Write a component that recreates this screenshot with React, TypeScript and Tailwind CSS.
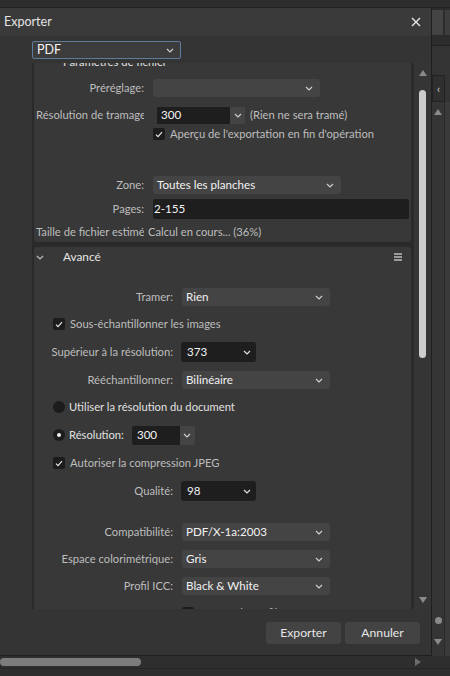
import React from "react";

const Chev = ({ c = "#cfcfcf" }: { c?: string }) => (
  <svg width="8" height="5" viewBox="0 0 8 5" className="shrink-0">
    <path d="M1 1 L4 4 L7 1" stroke={c} strokeWidth="1.2" fill="none" />
  </svg>
);

const Check = () => (
  <div className="w-[12px] h-[12px] rounded-[2px] bg-[#1c1c1c] flex items-center justify-center shrink-0">
    <svg width="8" height="7" viewBox="0 0 8 7">
      <path d="M1 3.6 L3 5.6 L7 1.2" stroke="#e8e8e8" strokeWidth="1.2" fill="none" />
    </svg>
  </div>
);

const Sel = ({ w, v, h = "h-[18px]" }: { w: string; v: string; h?: string }) => (
  <div className={`${w} ${h} bg-[#444444] rounded-[3px] flex items-center justify-between pl-[4px] pr-[7px] text-[#f2f2f2] text-[11.6px] shrink-0`}>
    <span className="whitespace-nowrap">{v}</span>
    <Chev />
  </div>
);

const DarkSel = ({ v }: { v: string }) => (
  <div className="w-[75px] h-[20px] bg-[#1e1e1e] rounded-[3px] flex items-center justify-between pl-[6px] pr-[5px] text-[#f2f2f2] text-[11.6px] shrink-0">
    <span>{v}</span>
    <Chev c="#e0e0e0" />
  </div>
);

const L1 = ({ t }: { t: string }) => (
  <div className="w-[108px] ml-[2px] text-right whitespace-nowrap overflow-hidden text-[#bdbdbd] leading-[16px] shrink-0">{t}</div>
);
const L2 = ({ t }: { t: string }) => (
  <div className="w-[139px] text-right whitespace-nowrap overflow-hidden text-[#bdbdbd] leading-[16px] shrink-0">{t}</div>
);

const UpTri = () => (
  <svg width="8" height="6" viewBox="0 0 8 6"><path d="M0 6 L4 0 L8 6Z" fill="#8a8a8a" /></svg>
);
const DownTri = () => (
  <svg width="8" height="6" viewBox="0 0 8 6"><path d="M0 0 L4 6 L8 0Z" fill="#8a8a8a" /></svg>
);

export default function App() {
  return (
    <div className="w-[450px] h-[676px] bg-[#2c2c2c] overflow-hidden flex flex-col font-['Lato',sans-serif] text-[11.2px] leading-[16px] select-none">
      {/* top strip */}
      <div className="h-[8px] bg-[#2d2d2d] border-b border-[#222] shrink-0" />
      <div className="flex h-[648px] shrink-0">
        {/* dialog */}
        <div className="w-[432px] bg-[#343434] border-r border-b border-[#1f1f1f] flex flex-col shrink-0">
          <div className="h-[28px] bg-[#3a3a3a] flex items-center justify-between pl-[4px] pr-[10px] shrink-0">
            <span className="text-[12.5px] text-[#e4e4e4]">Exporter</span>
            <svg width="10" height="10" viewBox="0 0 10 10">
              <path d="M1 1 L9 9 M9 1 L1 9" stroke="#e8e8e8" strokeWidth="1.4" />
            </svg>
          </div>
          <div className="h-[27px] pl-[32px] pt-[5px] shrink-0">
            <div className="w-[149px] h-[18px] border border-[#5e7c9c] bg-[#3c3c3c] rounded-[2px] flex items-center justify-between pl-[4px] pr-[6px] text-[#f4f4f4] text-[12.5px]">
              <span>PDF</span>
              <Chev />
            </div>
          </div>
          {/* scroll area */}
          <div className="flex h-[546px] ml-[32px] shrink-0">
            <div className="w-[381px] bg-[#2a2a2a] overflow-hidden pl-[2px] pr-[2px]">
              <div className="mt-[-13px] flex flex-col gap-[5px]">
                {/* section 1 */}
                <div className="bg-[#383838] rounded-[3px] flex flex-col h-[192px]">
                  <div className="h-[24px] flex items-center pl-[29px] text-[#e2e2e2] shrink-0">Paramètres de fichier</div>
                  <div className="h-[20px] mt-[4px] flex items-center">
                    <L1 t="Préréglage:" />
                    <div className="ml-[9px]"><Sel w="w-[167px]" v="" /></div>
                  </div>
                  <div className="h-[20px] mt-[7px] flex items-center">
                    <L1 t="Résolution de tramage" />
                    <div className="ml-[13px] flex h-[17px]">
                      <div className="w-[73px] bg-[#1e1e1e] flex items-center pl-[4px] text-[#f2f2f2] text-[11.6px]">300</div>
                      <div className="w-[15px] bg-[#444] flex items-center justify-center"><Chev /></div>
                    </div>
                    <span className="ml-[5px] text-[#bdbdbd] whitespace-nowrap">(Rien ne sera tramé)</span>
                  </div>
                  <div className="h-[18px] flex items-center pl-[119px]">
                    <Check />
                    <span className="ml-[5px] text-[#bdbdbd] whitespace-nowrap">Aperçu de l'exportation en fin d'opération</span>
                  </div>
                  <div className="h-[20px] mt-[32px] flex items-center">
                    <L1 t="Zone:" />
                    <div className="ml-[9px]"><Sel w="w-[188px]" v="Toutes les planches" /></div>
                  </div>
                  <div className="h-[20px] mt-[4px] flex items-center">
                    <L1 t="Pages:" />
                    <div className="ml-[9px] w-[256px] h-[20px] bg-[#1e1e1e] rounded-[2px] flex items-center pl-[1px] text-[#f2f2f2] text-[11.6px]">2-155</div>
                  </div>
                  <div className="h-[20px] mt-[3px] flex items-center">
                    <L1 t="Taille de fichier estimée :" />
                    <span className="ml-[4px] text-[#bdbdbd] whitespace-nowrap">Calcul en cours... (36%)</span>
                  </div>
                </div>
                {/* section 2 */}
                <div className="bg-[#383838] rounded-[3px] flex flex-col pb-[20px]">
                  <div className="h-[20px] flex items-center pl-[2px] pr-[9px] shrink-0">
                    <Chev c="#bdbdbd" />
                    <span className="ml-[19px] text-[#e6e6e6] text-[11.8px] flex-1">Avancé</span>
                    <div className="flex flex-col gap-[1.5px]">
                      <div className="w-[8px] h-[1.5px] bg-[#9a9a9a]" />
                      <div className="w-[8px] h-[1.5px] bg-[#9a9a9a]" />
                      <div className="w-[8px] h-[1.5px] bg-[#9a9a9a]" />
                    </div>
                  </div>
                  <div className="h-[20px] mt-[20px] flex items-center">
                    <L2 t="Tramer:" />
                    <div className="ml-[9px]"><Sel w="w-[148px]" v="Rien" /></div>
                  </div>
                  <div className="h-[18px] mt-[8px] flex items-center pl-[19px]">
                    <Check />
                    <span className="ml-[5px] text-[#bdbdbd] whitespace-nowrap">Sous-échantillonner les images</span>
                  </div>
                  <div className="h-[20px] mt-[9px] flex items-center">
                    <L2 t="Supérieur à la résolution:" />
                    <div className="ml-[8px]"><DarkSel v="373" /></div>
                  </div>
                  <div className="h-[20px] mt-[8px] flex items-center">
                    <L2 t="Rééchantillonner:" />
                    <div className="ml-[9px]"><Sel w="w-[148px]" v="Bilinéaire" /></div>
                  </div>
                  <div className="h-[18px] mt-[8px] flex items-center pl-[19px]">
                    <div className="w-[12px] h-[12px] rounded-full bg-[#1c1c1c] shrink-0" />
                    <span className="ml-[4px] text-[#e0e0e0] whitespace-nowrap">Utiliser la résolution du document</span>
                  </div>
                  <div className="h-[20px] mt-[9px] flex items-center pl-[19px]">
                    <div className="w-[12px] h-[12px] rounded-full bg-[#1c1c1c] flex items-center justify-center shrink-0">
                      <div className="w-[4px] h-[4px] rounded-full bg-[#f0f0f0]" />
                    </div>
                    <span className="ml-[4px] text-[#e0e0e0] whitespace-nowrap">Résolution:</span>
                    <div className="ml-[8px] flex h-[19px]">
                      <div className="w-[48px] bg-[#1e1e1e] rounded-l-[2px] flex items-center pl-[5px] text-[#f2f2f2] text-[11.6px]">300</div>
                      <div className="w-[15px] bg-[#444] rounded-r-[2px] flex items-center justify-center"><Chev /></div>
                    </div>
                  </div>
                  <div className="h-[18px] mt-[9px] flex items-center pl-[19px]">
                    <Check />
                    <span className="ml-[5px] text-[#bdbdbd] whitespace-nowrap">Autoriser la compression JPEG</span>
                  </div>
                  <div className="h-[20px] mt-[9px] flex items-center">
                    <L2 t="Qualité:" />
                    <div className="ml-[8px]"><DarkSel v="98" /></div>
                  </div>
                  <div className="h-[20px] mt-[21px] flex items-center">
                    <L2 t="Compatibilité:" />
                    <div className="ml-[9px]"><Sel w="w-[148px]" v="PDF/X-1a:2003" /></div>
                  </div>
                  <div className="h-[20px] mt-[7px] flex items-center">
                    <L2 t="Espace colorimétrique:" />
                    <div className="ml-[9px]"><Sel w="w-[148px]" v="Gris" /></div>
                  </div>
                  <div className="h-[20px] mt-[7px] flex items-center">
                    <L2 t="Profil ICC:" />
                    <div className="ml-[9px]"><Sel w="w-[148px]" v="Black & White" /></div>
                  </div>
                  <div className="h-[20px] mt-[7px] flex items-center pl-[148px]">
                    <div className="w-[12px] h-[12px] rounded-[2px] bg-[#1c1c1c] shrink-0" />
                    <span className="ml-[5px] text-[#bdbdbd] whitespace-nowrap">Intégrer le profil ICC</span>
                  </div>
                </div>
              </div>
            </div>
            {/* vertical scrollbar */}
            <div className="w-[18px] bg-[#353535] border-l border-[#2a2a2a] flex flex-col items-center pt-[7px] pb-[6px]">
              <UpTri />
              <div className="mt-[14px] w-[7px] h-[268px] rounded-full bg-[#cdcdcd]" />
              <div className="flex-1" />
              <DownTri />
            </div>
          </div>
          {/* footer */}
          <div className="flex-1 flex items-center justify-end pr-[11px] gap-[4px] pt-[1px]">
            <div className="w-[75px] h-[22px] rounded-[3px] bg-[#434343] flex items-center justify-center text-[#e6e6e6] text-[12.2px]">Exporter</div>
            <div className="w-[75px] h-[22px] rounded-[3px] bg-[#434343] flex items-center justify-center text-[#e6e6e6] text-[12.2px]">Annuler</div>
          </div>
        </div>
        {/* right app strip */}
        <div className="flex-1 flex flex-col bg-[#2c2c2c]">
          <div className="h-[28px] flex pt-[2px] pb-[1px] gap-[2px] shrink-0">
            <div className="w-[11px] bg-[#444444]" />
            <div className="flex-1 bg-[#3d3d3d]" />
          </div>
          <div className="h-[9px] shrink-0" />
          <div className="h-[30px] bg-[#333333] border-t border-[#222] shrink-0" />
          <div className="h-[27px] flex shrink-0">
            <div className="w-[13px] bg-[#2f2f2f] border border-[#222] flex items-center justify-center text-[#cfcfcf] text-[11px]">‹</div>
            <div className="flex-1 bg-[#333]" />
          </div>
          <div className="flex-1 flex">
            <div className="w-[13px] bg-[#353535] border-r border-[#2a2a2a] flex flex-col items-center pt-[7px] pb-[11px]">
              <UpTri />
              <div className="flex-1" />
              <div className="w-[7px] h-[7px] rounded-full bg-[#8a8a8a]" />
              <div className="mt-[15px] flex"><DownTri /></div>
            </div>
            <div className="flex-1 bg-[#3a3a3a]" />
          </div>
        </div>
      </div>
      {/* bottom horizontal scrollbar */}
      <div className="flex-1 bg-[#2e2e2e] flex flex-col">
        <div className="h-[13px] flex items-center border-b border-[#252525]">
          <div className="w-[141px] h-[8px] rounded-full bg-[#7c7c7c]" />
          <div className="flex-1" />
          <svg width="6" height="8" viewBox="0 0 6 8" className="mr-[29px]"><path d="M0 0 L6 4 L0 8Z" fill="#6c6c6c" /></svg>
        </div>
      </div>
    </div>
  );
}
